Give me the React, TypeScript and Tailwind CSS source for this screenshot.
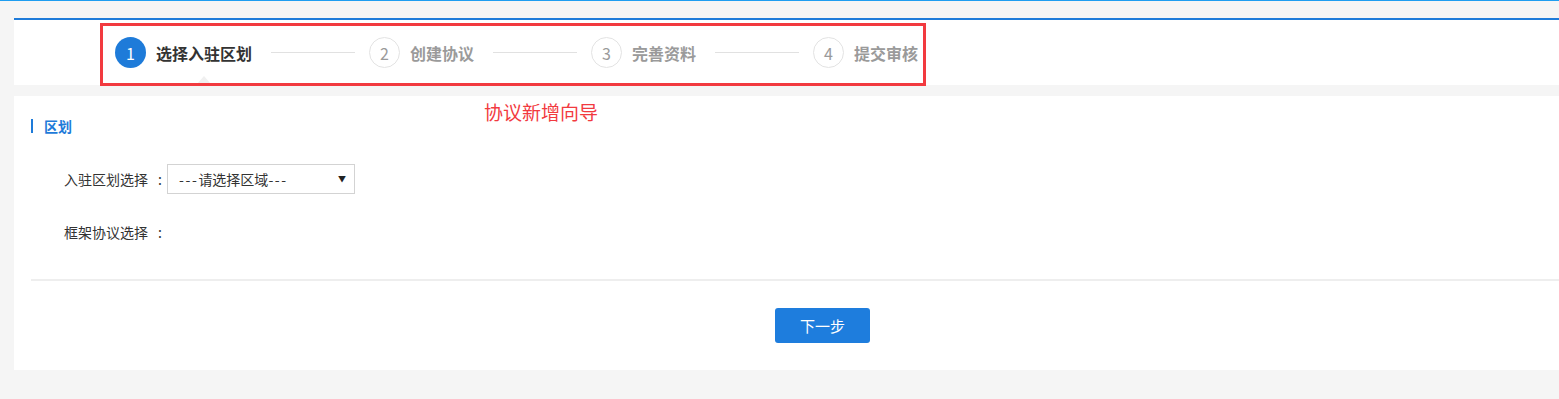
import React from "react";

const font = { fontFamily: '"Microsoft YaHei", "Noto Sans CJK SC", "Noto Sans", sans-serif' };

function Step({ n, label, active, last, showArrow }: { n: number; label: string; active?: boolean; last?: boolean; showArrow?: boolean }) {
  return (
    <div className="flex items-center">
      <div
        className={
          active
            ? "flex h-[31px] w-[31px] items-center justify-center rounded-full bg-[#1e7bd9] text-[16px] leading-none text-white"
            : "flex h-[31px] w-[31px] items-center justify-center rounded-full border border-[#e3e3e3] bg-white text-[16px] leading-none text-[#9a9a9a]"
        }
      >
        {n}
      </div>
      <div className="relative ml-[10px]">
        <span
          className={
            active
              ? "whitespace-nowrap text-[16px] font-bold leading-[22px] text-[#333]"
              : "whitespace-nowrap text-[16px] font-bold leading-[22px] text-[#9a9a9a]"
          }
        >
          {label}
        </span>
        {showArrow && (
          <span className="absolute left-1/2 top-[35px] -ml-[7px] h-0 w-0 border-x-[7px] border-b-[8px] border-x-transparent border-b-[#f0f0f0]" />
        )}
      </div>
      {!last && <div className="ml-[19px] mr-[14px] h-px w-[84px] bg-[#e1e1e1]" />}
    </div>
  );
}

function Label({ text }: { text: string }) {
  return (
    <span className="flex items-center text-[14px] leading-[20px] text-[#333]">
      {text}
      <span className="inline-block w-[14px] text-right">:</span>
    </span>
  );
}

export default function App() {
  return (
    <div className="relative min-h-[399px] border-t border-[#1e9df0] bg-[#f5f5f5] pb-[28px]" style={font}>
      <div className="pl-[14px] pt-[17px]">
        {/* header with steps */}
        <div className="flex h-[67px] items-center border-t-2 border-[#1e7bd9] bg-white pl-[101px]">
          <Step n={1} label="选择入驻区划" active showArrow />
          <Step n={2} label="创建协议" />
          <Step n={3} label="完善资料" />
          <Step n={4} label="提交审核" last />
        </div>

        {/* main panel */}
        <div className="mt-[11px] h-[274px] bg-white pt-[20px]">
          <div className="flex h-[20px] items-center pl-[17px]">
            <span className="h-[14px] w-[2px] bg-[#1e7bd9]" />
            <span className="ml-[11px] text-[14px] font-bold leading-[20px] text-[#1e7bd9]">区划</span>
          </div>

          <div className="mt-[28px] flex h-[30px] items-center pl-[50px]">
            <Label text="入驻区划选择" />
            <div className="ml-[5px] flex h-[30px] w-[188px] items-center justify-between border border-[#d3d3d3] bg-white pl-[11px] pr-[8px]">
              <span className="text-[14px] leading-[20px] text-[#333]">
                <span className="tracking-[1.6px]">---</span>请选择区域<span className="tracking-[1.6px]">---</span>
              </span>
              <span className="text-[8px] leading-none text-[#222]">▼</span>
            </div>
          </div>

          <div className="mt-[23px] flex h-[30px] items-center pl-[50px]">
            <Label text="框架协议选择" />
          </div>

          <div className="ml-[17px] mt-[32px] h-[2px] bg-[#eeeeee]" />

          <div className="ml-[761px] mt-[27px]">
            <button className="flex h-[35px] w-[95px] items-center justify-center rounded-[3px] bg-[#1e7ddd] text-[15px] leading-none text-white">
              下一步
            </button>
          </div>
        </div>
      </div>

      {/* annotation overlay */}
      <div className="pointer-events-none absolute left-[100px] top-[22px] h-[63px] w-[826px] border-[3px] border-[#f23a3f]" />
      <div className="pointer-events-none absolute left-[484px] top-[98px] text-[19px] leading-[26px] text-[#f23a3f]">
        协议新增向导
      </div>
    </div>
  );
}
